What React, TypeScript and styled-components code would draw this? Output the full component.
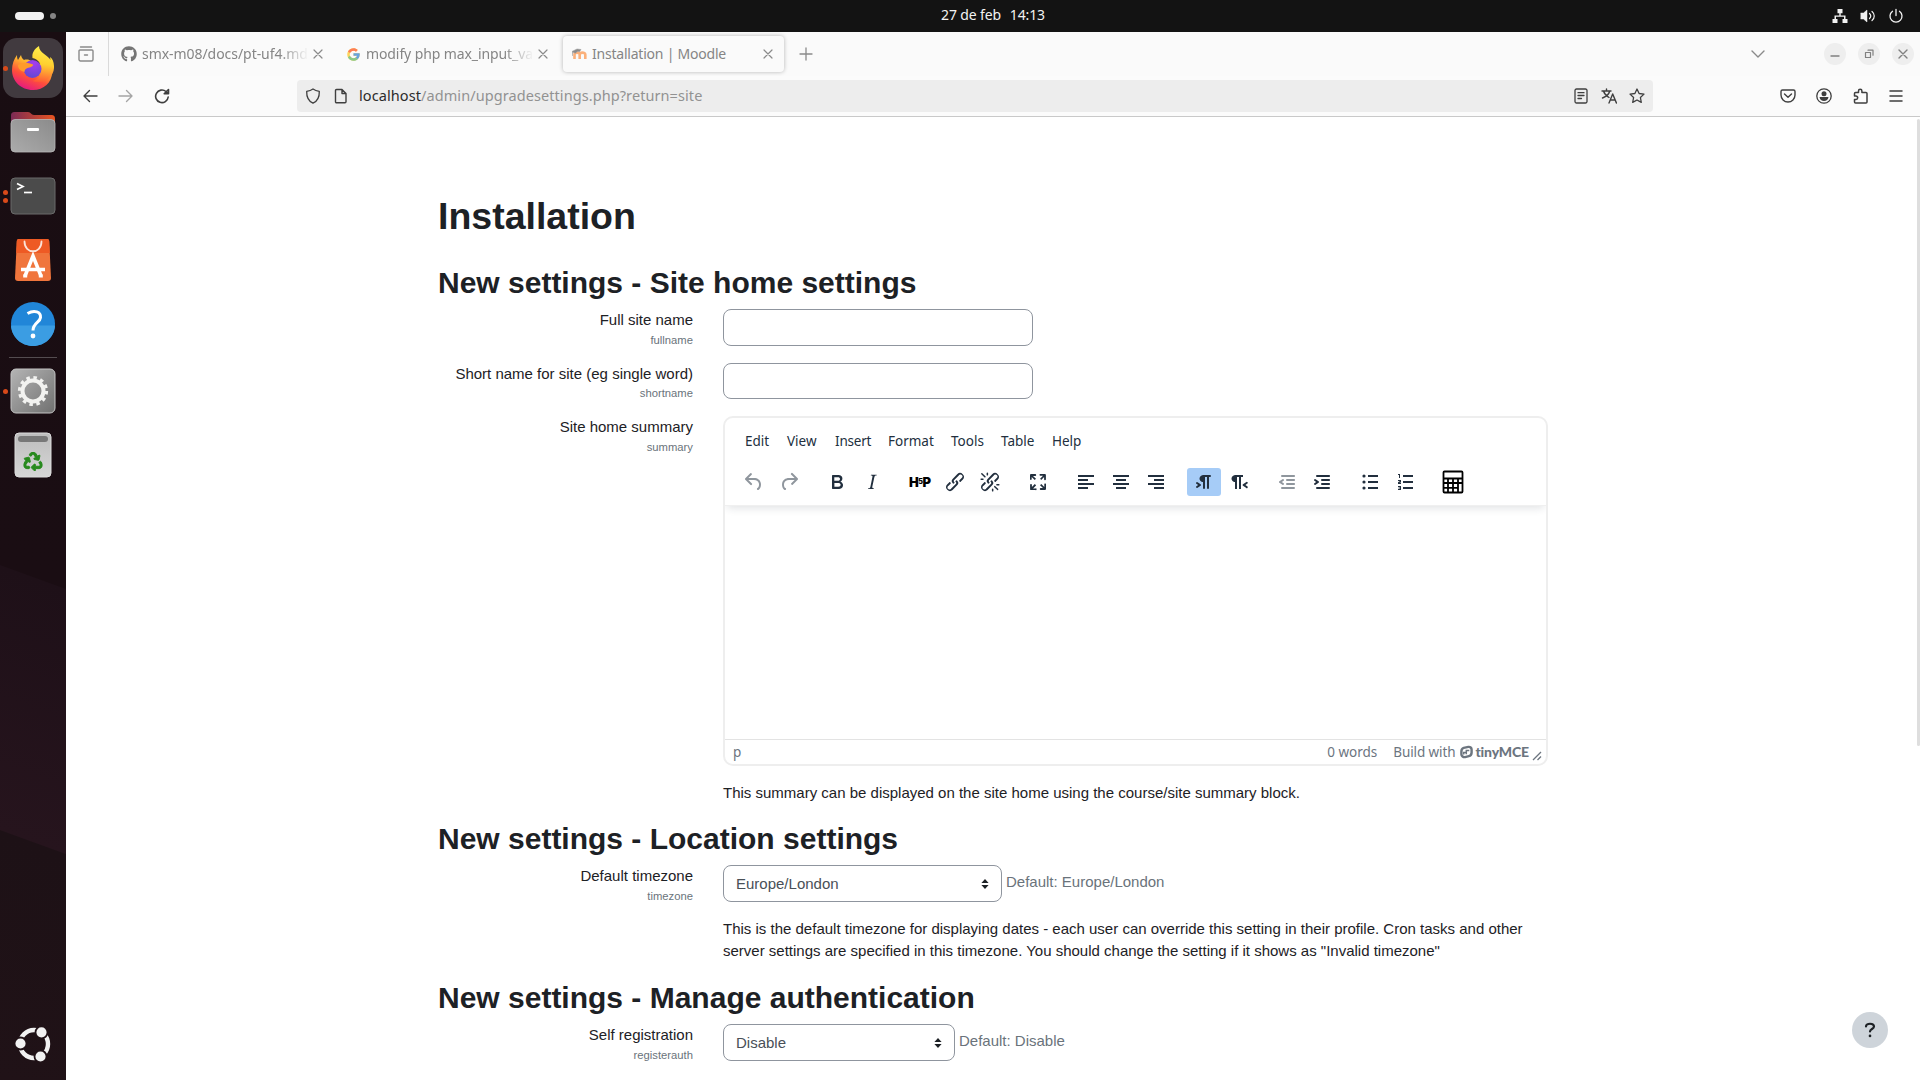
import React from "react";
import styled, { createGlobalStyle, css } from "styled-components";
import { FaGithub, FaRecycle } from "react-icons/fa";
import { FcGoogle } from "react-icons/fc";

const ui = `"Noto Sans", "Open Sans", sans-serif`;

const Global = createGlobalStyle`
  * { box-sizing: border-box; }
  body { margin: 0; background: #fff; overflow: hidden; }
  svg { display: block; flex: none; }
`;

const Screen = styled.div`
  width: 1920px;
  height: 1080px;
  display: grid;
  grid-template: 32px 1048px / 66px 1fr;
  overflow: hidden;
  font-family: "Liberation Sans", Arial, sans-serif;
`;

/* ---------- Desktop ---------- */
const TopBar = styled.header`
  grid-column: 1 / 3;
  background: #131313;
  display: grid;
  grid-template-columns: 1fr auto 1fr;
  align-items: center;
  padding: 0 16px 0 15px;
  color: #f2f2f2;
`;
const Workspaces = styled.div`
  display: flex;
  align-items: center;
  gap: 6px;
`;
const Pill = styled.span<{ $w: number; $h: number; $c: string }>`
  width: ${(p) => p.$w}px;
  height: ${(p) => p.$h}px;
  border-radius: 4px;
  background: ${(p) => p.$c};
`;
const Clock = styled.div`
  display: flex;
  gap: 9px;
  font: 14px/30px ${ui};
  padding-bottom: 2px;
  margin-left: 67px;
  letter-spacing: -0.15px;
`;
const Tray = styled.div`
  display: flex;
  justify-content: flex-end;
  align-items: center;
  gap: 12px;
`;
const Dock = styled.nav`
  background: linear-gradient(200deg, #190d12 0, #1a0d13 523px, #1e1018 524px, #26141d 772px, #1d1116 773px, #201217 100%);
  display: flex;
  flex-direction: column;
  align-items: center;
  padding-top: 6px;
`;
const DockItem = styled.div<{ $active?: boolean }>`
  position: relative;
  width: 60px;
  height: 60px;
  margin-bottom: 4px;
  border-radius: 14px;
  display: grid;
  place-items: center;
  background: ${(p) => (p.$active ? "#413a3f" : "transparent")};
`;
const Dots = styled.div`
  position: absolute;
  left: 0;
  top: 0;
  height: 60px;
  display: flex;
  flex-direction: column;
  justify-content: center;
  gap: 3px;
`;
const Dot = styled.i`
  width: 5px;
  height: 5px;
  border-radius: 50%;
  background: #d94a1a;
`;
const DockRule = styled.div`
  width: 48px;
  height: 1px;
  margin: -1px 0 3px;
  background: #544c50;
`;
const DockBottom = styled.div`
  margin-top: auto;
  padding: 0 0 17px 1px;
`;

/* ---------- Browser ---------- */
const Browser = styled.div`
  display: flex;
  flex-direction: column;
  min-width: 0;
  background: #fff;
`;
const TabBar = styled.div`
  height: 44px;
  background: #fafafa;
  display: flex;
  align-items: center;
  color: #8a8a8a;
  padding-right: 6px;
`;
const ViewButton = styled.div`
  width: 43px;
  height: 44px;
  border-right: 1px solid #dadada;
  display: grid;
  place-items: center;
  padding-right: 3px;
  margin-right: 4px;
`;
const Tab = styled.div<{ $w: number; $selected?: boolean }>`
  width: ${(p) => p.$w}px;
  height: 36px;
  border-radius: 4px;
  display: flex;
  align-items: center;
  padding: 0 12px 0 8px;
  ${(p) => p.$selected && css`padding-right: 8px; box-shadow: 0 0 4px rgba(0, 0, 0, 0.28);`}
`;
const TabTitle = styled.div<{ $fade?: boolean; $ls?: number }>`
  flex: 1;
  min-width: 0;
  overflow: hidden;
  white-space: nowrap;
  margin: 0 1px 1px 5px;
  font: 14px/24px ${ui};
  letter-spacing: ${(p) => p.$ls ?? 0}px;
  color: #858585;
  ${(p) => p.$fade && css`mask-image: linear-gradient(to left, transparent, #000 30px);`}
`;
const NewTab = styled.div`
  margin-left: 14px;
`;
const ListTabs = styled.div`
  margin-right: 58px;
`;
const Spacer = styled.div`
  flex: 1;
`;
const WinButton = styled.div`
  width: 22px;
  height: 22px;
  border-radius: 50%;
  background: #eeeeee;
  display: grid;
  place-items: center;
  margin-right: 12px;
  color: #808080;
  &:last-child { margin-right: 0; }
`;
const NavBar = styled.div`
  height: 41px;
  background: #fbfbfb;
  border-bottom: 1px solid #c9c9c9;
  display: flex;
  align-items: center;
  padding: 0 16px;
  color: #3f3f3f;
`;
const NavButtons = styled.div`
  display: flex;
  gap: 20px;
  width: 215px;
`;
const Dimmed = styled.span`
  opacity: 0.45;
`;
const UrlBar = styled.div`
  width: 1356px;
  height: 32px;
  border-radius: 4px;
  background: #ededed;
  display: flex;
  align-items: center;
  gap: 12px;
  padding: 0 8px;
`;
const Url = styled.div`
  flex: 1;
  font: 14.5px/28px ${ui};
  padding-bottom: 2px;
  letter-spacing: 0.08px;
  color: #929292;
  margin-left: -2px;
  b { font-weight: 400; color: #2b2b2b; }
`;
const NavTools = styled.div`
  flex: 1;
  display: flex;
  justify-content: flex-end;
  gap: 20px;
`;

/* ---------- Moodle page ---------- */
const Page = styled.main`
  position: relative;
  flex: 1;
  overflow: hidden;
  padding: 76.5px 0 0 372px;
  color: #1d2125;
  font-size: 15px;
  line-height: 22.5px;
`;
const Scroll = styled.div`
  position: absolute;
  right: 0;
  top: 2px;
  width: 3px;
  height: 627px;
  border-radius: 2px;
  background: #dedede;
`;
const HelpFab = styled.div`
  position: absolute;
  right: 32px;
  top: 895px;
  width: 36px;
  height: 36px;
  border-radius: 50%;
  background: #ced4da;
  display: grid;
  place-items: center;
`;
const Title = styled.h1`
  margin: 0 0 26px;
  font-size: 37.5px;
  line-height: 45px;
`;
const Heading = styled.h2`
  margin: 0 0 8.5px;
  font-size: 30px;
  line-height: 36px;
`;
const Row = styled.div<{ $gap: number }>`
  display: grid;
  grid-template-columns: 255px 825px;
  column-gap: 30px;
  margin-bottom: ${(p) => p.$gap}px;
`;
const Label = styled.div`
  text-align: right;
  small {
    display: block;
    font-size: 11.25px;
    line-height: 16.9px;
    color: #6a737b;
  }
`;
const TextInput = styled.input`
  display: block;
  width: 310px;
  height: 36.5px;
  border: 1px solid #8f959e;
  border-radius: 8px;
  background: #fff;
`;
const SelectLine = styled.div`
  display: flex;
  gap: 4px;
  color: #6a737b;
  line-height: 34px;
`;
const Select = styled.div<{ $w: number }>`
  width: ${(p) => p.$w}px;
  height: 36.5px;
  border: 1px solid #8f959e;
  border-radius: 8px;
  display: flex;
  align-items: center;
  justify-content: space-between;
  padding: 0 12px;
  color: #495057;
`;
const Note = styled.p`
  margin: 16px 0 0;
`;

/* ---------- TinyMCE ---------- */
const Editor = styled.div`
  height: 350px;
  border: 2px solid #eeeeee;
  border-radius: 10px;
  overflow: hidden;
  display: flex;
  flex-direction: column;
  color: #222f3e;
`;
const EditorHead = styled.div`
  height: 88px;
  box-shadow: 0 4px 8px -2px rgba(34, 47, 62, 0.14);
  border-bottom: 1px solid #f0f0f0;
`;
const MenuBar = styled.div`
  display: flex;
  height: 44px;
  padding-left: 20px;
  font: 13.5px/46px ${ui};
`;
const MenuItem = styled.span<{ $w: number; $ls?: number }>`
  width: ${(p) => p.$w}px;
  white-space: nowrap;
  letter-spacing: ${(p) => p.$ls ?? 0}px;
`;
const ToolBar = styled.div`
  display: flex;
  padding: 6px 0 0 12px;
`;
const Group = styled.div`
  display: flex;
  gap: 1px;
  margin-right: 14px;
`;
const Tool = styled.div<{ $on?: boolean; $off?: boolean }>`
  width: 34px;
  height: 28px;
  border-radius: 3px;
  display: grid;
  place-items: center;
  background: ${(p) => (p.$on ? "#a6ccf7" : "transparent")};
  opacity: ${(p) => (p.$off ? 0.5 : 1)};
`;
const H5P = styled.span`
  display: flex;
  align-items: center;
  font: 900 13px/20px Inter, sans-serif;
  color: #000;
  i { font-style: normal; font-size: 7px; margin: 0 -0.5px; }
`;
const Canvas = styled.div`
  flex: 1;
`;
const StatusBar = styled.div`
  height: 25px;
  border-top: 1px solid #e3e3e3;
  display: flex;
  align-items: center;
  padding: 0 4px 1px 8px;
  font: 13.5px/24px ${ui};
  color: #6c757f;
  white-space: nowrap;
`;
const Words = styled.span`
  margin-right: 16px;
`;
const Credit = styled.span`
  letter-spacing: -0.1px;
  margin-right: 5px;
`;
const TinyName = styled.span`
  font: 900 14px/20px Lato, sans-serif;
  letter-spacing: -0.15px;
  margin: 0 3px 0 2px;
`;
const Grip = styled.span`
  margin-top: 8px;
`;

/* ---------- Drawings ---------- */
type GProps = { d: string; s?: number; fill?: boolean; sw?: number };
const G = ({ d, s = 16, fill, sw = 1.4 }: GProps) => (
  <svg width={s} height={s} viewBox={`0 0 ${s} ${s}`} fill={fill ? "currentColor" : "none"} stroke={fill ? "none" : "currentColor"} strokeWidth={sw} strokeLinecap="round" strokeLinejoin="round">
    <path d={d} />
  </svg>
);
const T = ({ d }: { d: string }) => (
  <svg width="24" height="24" viewBox="0 0 24 24" fill="currentColor" fillRule="evenodd"><path d={d} /></svg>
);
const CloseX = () => <G s={16} sw={1.2} d="M4 4l8 8M12 4l-8 8" />;

const Firefox = () => (
  <svg width="42" height="44" viewBox="0 0 42 44">
    <defs>
      <linearGradient id="ffBody" x1=".8" y1="0" x2=".3" y2="1">
        <stop offset="0" stopColor="#fff44f" /><stop offset=".35" stopColor="#ffb02e" />
        <stop offset=".65" stopColor="#ff4f3a" /><stop offset="1" stopColor="#e31587" />
      </linearGradient>
      <radialGradient id="ffGlobe" cx=".6" cy=".2" r=".9">
        <stop offset="0" stopColor="#a63cf0" /><stop offset="1" stopColor="#5a4ad0" />
      </radialGradient>
      <linearGradient id="ffFlame" x1=".5" y1="0" x2=".4" y2="1">
        <stop offset="0" stopColor="#fff14d" /><stop offset=".5" stopColor="#ffd030" /><stop offset="1" stopColor="#ff5a35" />
      </linearGradient>
    </defs>
    <path d="M5 9c0 2 .3 4 1 5l3-5c.3 2 1.500 4 3 5 2-.7 5-.5 7 1l6 2 14 4c4 12-5 23-18 23C9 44 0 35 0 24c0-6 2-11 5-15z" fill="url(#ffBody)" />
    <path d="M27 0c-6 4-7 8-6.500 12 5 1 9 5 9 12 0 7-5 10-9 11 12 4 21-4 21.500-13 .2-5-1-9-4-11l.5 3C36 9 27 7 27 0z" fill="url(#ffFlame)" />
    <circle cx="20.500" cy="23" r="9" fill="url(#ffGlobe)" />
    <path d="M6 19c4-3 9-3 15-.5.5 2-3 3-5.500 3.500-2 .8-3 2-3 4C9 25 6 23 6 19z" fill="#ff9a2c" />
  </svg>
);
const Files = () => (
  <svg width="46" height="42" viewBox="0 0 46 42">
    <defs>
      <linearGradient id="flBack"><stop offset="0" stopColor="#7b2a55" /><stop offset="1" stopColor="#e95420" /></linearGradient>
      <linearGradient id="flFront" x1="0" y1="1" x2="1" y2="0"><stop offset="0" stopColor="#ababab" /><stop offset="1" stopColor="#8b8b8b" /></linearGradient>
    </defs>
    <path d="M1 5c0-3 1-4 4-4h13c3 0 3 3 6 3h17c3 0 4 1 4 4v12H1z" fill="url(#flBack)" />
    <rect x="1" y="8.500" width="44" height="32.500" rx="4" fill="url(#flFront)" stroke="#b9b9b9" strokeWidth=".8" />
    <rect x="17" y="17" width="12" height="3" rx="1" fill="#fff" />
  </svg>
);
const Terminal = () => (
  <svg width="46" height="38" viewBox="0 0 46 38">
    <rect x="1" y="1" width="44" height="36" rx="4" fill="#4b4b4b" stroke="#6a6a6a" />
    <path d="M7 6.500l6 3-6 3" fill="none" stroke="#fff" strokeWidth="1.700" /><path d="M14 15.500h8" stroke="#fff" strokeWidth="1.700" />
  </svg>
);
const Software = () => (
  <svg width="36" height="42" viewBox="0 0 36 42">
    <path d="M4 0h28c1.500 0 2 .8 2.200 2L36 39c0 2-1 3-3 3H3c-2 0-3-1-3-3L1.800 2C2 .8 2.500 0 4 0z" fill="#f0753c" />
    <path d="M4 0h28c1.500 0 2 .8 2.200 2l.6 12H1.200l.6-12C2 .8 2.500 0 4 0z" fill="#ee5a24" />
    <path d="M9.500 2.500c0 13 17 13 17 0" fill="none" stroke="#fbe3d8" strokeWidth="1.800" strokeLinecap="round" />
    <path d="M10 37l8-20 8 20M6 30.500h24" fill="none" stroke="#fff" strokeWidth="3.600" />
    <path d="M8.200 37h4M23.800 37h4" stroke="#fff" strokeWidth="3" />
  </svg>
);
const Help = () => (
  <svg width="46" height="46" viewBox="0 0 46 46">
    <circle cx="23" cy="23" r="22" fill="#2186d8" />
    <path d="M1 24.500h44C44.500 36 35 45 23 45S1.500 36 1 24.500z" fill="#3b9de3" />
    <path d="M17.500 12.500c7-4 13.500-1.500 13 4-.5 5-7.500 5.500-7.500 13" fill="none" stroke="#fff" strokeWidth="3" />
    <circle cx="23" cy="35" r="2.400" fill="#fff" />
  </svg>
);
const Settings = () => (
  <svg width="46" height="46" viewBox="0 0 46 46">
    <defs><linearGradient id="stBg" x2="1" y2="1"><stop offset="0" stopColor="#b4b4b4" /><stop offset="1" stopColor="#707070" /></linearGradient></defs>
    <rect x="1" y="1" width="44" height="44" rx="5" fill="url(#stBg)" stroke="#c4c4c4" />
    <circle cx="23" cy="23" r="10.500" fill="none" stroke="#f2f2f0" strokeWidth="4" />
    <circle cx="23" cy="23" r="13.500" fill="none" stroke="#f2f2f0" strokeWidth="3.200" strokeDasharray="3.500 3.568" />
  </svg>
);
const Trash = () => (
  <svg width="38" height="46" viewBox="0 0 38 46">
    <defs><linearGradient id="trBg" x2="0" y2="1"><stop offset="0" stopColor="#bdbdbd" /><stop offset="1" stopColor="#d6d6d6" /></linearGradient></defs>
    <rect x="1" y="1" width="36" height="44" rx="4" fill="url(#trBg)" stroke="#dcdcdc" />
    <rect x="4" y="4" width="30" height="6" rx="3" fill="#787878" />
    <g transform="translate(9.500 20)"><FaRecycle size={19} color="#288a1e" stroke="#288a1e" strokeWidth={26} /></g>
  </svg>
);
const UbuntuMark = () => (
  <svg width="38" height="38" viewBox="-19 -19 38 38">
    <circle r="14" fill="none" stroke="#f2f2f2" strokeWidth="4.400" />
    <g fill="#f2f2f2" stroke="#201217" strokeWidth="1.800">
      <circle cx="-13.500" cy="-.5" r="6" /><circle cx="7.500" cy="-11.700" r="6" /><circle cx="6.500" cy="12.500" r="6" />
    </g>
  </svg>
);
const MoodleMark = () => (
  <svg width="16" height="16" viewBox="0 0 16 16" fill="none">
    <path d="M3.500 13V8.500C3.500 6 8.700 6 8.700 8.500V13M8.700 13V8.500c0-2.500 5.600-2.500 5.600 0V13" stroke="#fbb07a" strokeWidth="2.600" />
    <path d="M1 5.500L6 3l4 .5-1.500 2.200c-1.500-.5-3 0-4 1.500L1.500 6v4" fill="#8a8a8a" stroke="#a0a0a0" strokeWidth=".6" />
  </svg>
);
const TinyMark = () => (
  <svg width="13" height="14" viewBox="0 0 14 14" fill="none" stroke="currentColor">
    <path d="M4 2.500l5-1c2-.3 3.500 1 3.500 3v3c0 2-1 3.500-3 4l-4 1c-2 .3-4-1-4-3v-3c0-2 .8-3.500 2.500-4z" strokeWidth="2.600" />
    <path d="M4 9.800V7.500h2.800V5.300H10M6.800 7.500v1.800" strokeWidth="1.600" />
  </svg>
);
const Arrows = () => (
  <svg width="8" height="10" viewBox="0 0 8 10" fill="#1d2125"><path d="M4 0l3.600 4H.4zM4 10L.4 6h7.200z" /></svg>
);

const chain = "M6.2 12.3a1 1 0 0 1 1.4 1.4l-2 2a2 2 0 1 0 2.600 2.800l4.800-4.800a1 1 0 0 0 0-1.400 1 1 0 1 1 1.400-1.300 2.900 2.900 0 0 1 0 4L9.600 20a3.900 3.900 0 0 1-5.500-5.500l2-2Zm11.600-.6a1 1 0 0 1-1.400-1.400l2-2a2 2 0 1 0-2.600-2.800L11 10.300a1 1 0 0 0 0 1.400A1 1 0 1 1 9.600 13a2.900 2.900 0 0 1 0-4L14.400 4a3.900 3.900 0 0 1 5.500 5.500l-2 2Z";
const dentLines = "M7 5h12c.6 0 1 .4 1 1s-.4 1-1 1H7a1 1 0 1 1 0-2Zm5 4h7c.6 0 1 .4 1 1s-.4 1-1 1h-7a1 1 0 0 1 0-2Zm0 4h7c.6 0 1 .4 1 1s-.4 1-1 1h-7a1 1 0 0 1 0-2Zm-5 4h12a1 1 0 0 1 0 2H7a1 1 0 0 1 0-2Z";
const icons = {
  undo: "M6.4 8H12c3.700 0 6.200 2 6.800 5.100.6 2.700-.4 5.600-2.300 6.800a1 1 0 0 1-1-1.800c1.100-.6 1.800-2.700 1.400-4.600-.5-2.100-2.100-3.500-4.900-3.500H6.400l3.300 3.300a1 1 0 1 1-1.400 1.400l-5-5a1 1 0 0 1 0-1.400l5-5a1 1 0 0 1 1.400 1.400L6.400 8z",
  redo: "M17.600 10H12c-2.800 0-4.400 1.400-4.900 3.500-.4 2 .3 4 1.400 4.600a1 1 0 1 1-1 1.800c-2-1.200-2.900-4.100-2.300-6.800.6-3 3-5.100 6.800-5.100h5.600l-3.300-3.300a1 1 0 1 1 1.400-1.400l5 5a1 1 0 0 1 0 1.400l-5 5a1 1 0 0 1-1.400-1.400l3.300-3.300z",
  bold: "M7.800 19c-.3 0-.5 0-.6-.2l-.2-.5V5.700c0-.2 0-.4.2-.5l.6-.2h5c1.500 0 2.700.3 3.500 1 .7.6 1.100 1.400 1.100 2.500a3 3 0 0 1-.6 1.900c-.4.6-1 1-1.600 1.200.4.1.9.3 1.300.6s.8.7 1 1.200c.4.4.5 1 .5 1.600 0 1.300-.4 2.300-1.300 3-.8.7-2.100 1-3.800 1H7.800Zm5-8.300c.6 0 1.200-.1 1.600-.5.4-.3.6-.7.6-1.300 0-1.100-.8-1.700-2.300-1.700H9.300v3.500h3.400Zm.5 6c.7 0 1.300-.1 1.700-.4.4-.4.6-.9.6-1.500s-.2-1-.7-1.400c-.4-.3-1-.4-2-.4H9.400v3.800h4Z",
  italic: "m16.700 4.700-.1.900h-.3c-.6 0-1 0-1.400.3-.3.3-.4.6-.5 1.100l-2.100 9.800v.6c0 .5.4.8 1.400.8h.2l-.2.8H8l.2-.8h.2c1.100 0 1.800-.5 2-1.500l2-9.800.1-.5c0-.6-.4-.8-1.400-.8h-.3l.2-.9h5.800Z",
  unlink: chain + "M7.600 6.300a.8.800 0 0 1-1 1.100L3.300 4.200a.7.700 0 1 1 1-1l3.200 3.100ZM5.100 8.600a.8.800 0 0 1 0 1.500H3a.8.800 0 0 1 0-1.500H5Zm5-3.500a.8.800 0 0 1-1.500 0V3a.8.800 0 0 1 1.500 0V5Zm6 11.800a.8.800 0 0 1 1-1l3.200 3.200a.8.800 0 0 1-1 1L16 17Zm-2.200 2a.8.800 0 0 1 1.500 0V21a.8.800 0 0 1-1.500 0V19Zm5-3.500a.7.700 0 1 1 0-1.500H21a.8.800 0 0 1 0 1.500H19Z",
  full: "m15.300 10-1.200-1.300 2.900-3h-2.300a.9.900 0 1 1 0-1.700H19c.5 0 .9.4.9.9v4.400a.9.900 0 1 1-1.800 0V7l-2.900 3Zm0 4 3 3v-2.300a.9.900 0 1 1 1.700 0V19c0 .5-.4.9-.9.9h-4.400a.9.900 0 1 1 0-1.800H17l-3-2.900 1.300-1.200ZM10 15.400l-2.900 3h2.300a.9.900 0 1 1 0 1.700H5a.9.900 0 0 1-.9-.9v-4.400a.9.900 0 1 1 1.800 0V17l2.900-3 1.200 1.300ZM8.700 10 5.700 7v2.300a.9.900 0 0 1-1.700 0V5c0-.5.4-.9.9-.9h4.400a.9.900 0 0 1 0 1.800H7l3 2.900-1.300 1.200Z",
  left: "M4 5h16v2H4zM4 9h10v2H4zM4 13h16v2H4zM4 17h10v2H4z",
  center: "M4 5h16v2H4zM7 9h10v2H7zM4 13h16v2H4zM7 17h10v2H7z",
  right: "M4 5h16v2H4zM10 9h10v2H10zM4 13h16v2H4zM10 17h10v2H10z",
  ltr: "M11 5h7a1 1 0 0 1 0 2h-1v11a1 1 0 0 1-2 0V7h-2v11a1 1 0 0 1-2 0v-6c-.5 0-1 0-1.400-.3A3.400 3.400 0 0 1 7.800 10a3.300 3.300 0 0 1 0-2.800 3.400 3.400 0 0 1 1.800-1.800L11 5ZM4.400 16.200 6.200 15l-1.800-1.200a1 1 0 0 1 1.200-1.600l3 2a1 1 0 0 1 0 1.600l-3 2a1 1 0 1 1-1.200-1.600Z",
  rtl: "M8 5h8v2h-2v12h-2V7h-2v12H8v-7c-.5 0-1 0-1.400-.3A3.400 3.400 0 0 1 4.800 10a3.300 3.300 0 0 1 0-2.800 3.400 3.400 0 0 1 1.800-1.800L8 5Zm12 11.200a1 1 0 1 1-1 1.600l-3-2a1 1 0 0 1 0-1.600l3-2a1 1 0 1 1 1 1.600L18.400 15l1.800 1.200Z",
  outdent: dentLines + "M8.600 13.200a1 1 0 0 1-1.200 1.600l-3-2a1 1 0 0 1 0-1.600l3-2a1 1 0 0 1 1.200 1.600L6.800 12l1.800 1.200Z",
  indent: dentLines + "M4.400 13.200L6.200 12l-1.800-1.200a1 1 0 0 1 1.200-1.600l3 2a1 1 0 0 1 0 1.600l-3 2a1 1 0 1 1-1.200-1.600Z",
  bullets: "M10 5h10v2H10zM10 11h10v2H10zM10 17h10v2H10zM6 4.400a1.600 1.600 0 1 1 0 3.200 1.600 1.600 0 0 1 0-3.200zM6 10.400a1.600 1.600 0 1 1 0 3.200 1.600 1.600 0 0 1 0-3.200zM6 16.400a1.600 1.600 0 1 1 0 3.200 1.600 1.600 0 0 1 0-3.200z",
  numbers: "M10 5h10v2H10zM10 11h10v2H10zM10 17h10v2H10zM5 4h2v4H6V5H5zM5 10h3v2.400L6.300 13H8v1H5v-1.800L7 11H5zM5 16h3v4H5v-1h2v-.6H5.500v-.8H7V17H5z",
};
const CalcIcon = () => (
  <svg width="24" height="24" viewBox="0 0 24 24" fill="none" stroke="#000" strokeWidth="1.800">
    <rect x="2.500" y="1.500" width="19" height="21" rx="1" /><path d="M2 8.500h20M2 13h20M2 17.800h15M7 8v14M12 8v14M17 8v14" />
  </svg>
);

export default function App() {
  return (
    <Screen>
      <Global />
      <TopBar>
        <Workspaces><Pill $w={29} $h={8} $c="#f2f2f2" /><Pill $w={6} $h={6} $c="#858585" /></Workspaces>
        <Clock><span>27 de feb</span><span>14:13</span></Clock>
        <Tray>
          <G fill d="M5.500 1h5v4.200H8.700V7.500H13.500v3.500h2v4h-5v-4h1.500V8.800H4V11h1.500v4h-5v-4h2V7.500H7.300V5.200H5.500z" />
          <svg width="16" height="16" viewBox="0 0 16 16" fill="none" stroke="#f2f2f2" strokeLinecap="round"><path d="M1 5h2.500L7 2v12L3.500 11H1z" fill="#f2f2f2" strokeWidth=".5" /><path d="M9.500 5.500c1.500 1.500 1.500 3.500 0 5M12 3.500c3 2.500 3 6.500 0 9" strokeWidth="1.200" /></svg>
          <G sw={1.300} d="M8 1.500v6M4.500 3.300a6 6 0 1 0 7 0" />
        </Tray>
      </TopBar>

      <Dock>
        <DockItem $active><Dots><Dot /></Dots><Firefox /></DockItem>
        <DockItem><Files /></DockItem>
        <DockItem><Dots><Dot /><Dot /></Dots><Terminal /></DockItem>
        <DockItem><Software /></DockItem>
        <DockItem><Help /></DockItem>
        <DockRule />
        <DockItem><Dots><Dot /></Dots><Settings /></DockItem>
        <DockItem><Trash /></DockItem>
        <DockBottom><UbuntuMark /></DockBottom>
      </Dock>

      <Browser>
        <TabBar>
          <ViewButton><G sw={1.400} d="M2.500 1h11M2 4h12a1 1 0 0 1 1 1v8.500a1.500 1.500 0 0 1-1.500 1.500h-11A1.500 1.500 0 0 1 1 13.500V5a1 1 0 0 1 1-1zM6.500 9h3" /></ViewButton>
          <Tab $w={225}><FaGithub size={16} color="#757575" /><TabTitle $fade $ls={-0.05}>smx-m08/docs/pt-uf4.md</TabTitle><CloseX /></Tab>
          <Tab $w={225}><FcGoogle size={15} opacity={0.65} /><TabTitle $fade $ls={-0.1}>modify php max_input_va</TabTitle><CloseX /></Tab>
          <Tab $w={221} $selected><MoodleMark /><TabTitle $ls={-0.22}>Installation | Moodle</TabTitle><CloseX /></Tab>
          <NewTab><G sw={1.300} d="M8 2v12M2 8h12" /></NewTab>
          <Spacer />
          <ListTabs><G d="M2 5l6 6 6-6" /></ListTabs>
          <WinButton><G s={10} d="M1 7h8" /></WinButton>
          <WinButton><G s={10} sw={1.200} d="M1.500 3.500h5v5h-5zM4 1.200h5v5" /></WinButton>
          <WinButton><G s={10} sw={1.400} d="M1 1l8 8M9 1L1 9" /></WinButton>
        </TabBar>
        <NavBar>
          <NavButtons>
            <G d="M15 8H2M7.500 2.500L2 8l5.500 5.500" />
            <Dimmed><G d="M1 8h13M8.500 2.500L14 8l-5.500 5.500" /></Dimmed>
            <G sw={1.600} d="M14.200 9A6.300 6.300 0 1 1 12 3.500l2 2M14.500 1.500v4.300h-4.300z" />
          </NavButtons>
          <UrlBar>
            <G sw={1.300} d="M8 1c2 1.400 4 2 6.300 2.400C14.500 9 12.500 13 8 15.200 3.500 13 1.500 9 1.700 3.400 4 3 6 2.400 8 1z" />
            <G d="M3.500 1.500H9l4 4v8.300a1 1 0 0 1-1 1H3.500a1 1 0 0 1-1-1V2.500a1 1 0 0 1 1-1zM9 2v3.500h3.500" />
            <Url><b>localhost</b>/admin/upgradesettings.php?return=site</Url>
            <G sw={1.300} d="M3.500 1h9a1.500 1.500 0 0 1 1.500 1.500v11a1.500 1.500 0 0 1-1.500 1.500h-9A1.500 1.500 0 0 1 2 13.500v-11A1.500 1.500 0 0 1 3.500 1zM5 4.700h6M5 7.500h6M5 10.500h3.500" />
            <G sw={1.400} d="M1 3h9M5.500 1v2M2.500 3c1 3.500 3 5 5.500 6.500M8.700 3C8 6 5.500 8.500 1.500 10M8 15l3.700-9 3.700 9M9.200 12h5" />
            <G sw={1.300} d="M8 1l2.100 4.500 4.900.6-3.600 3.400.9 4.900L8 12l-4.300 2.400.9-4.900L1 6.100l4.900-.6z" />
          </UrlBar>
          <NavTools>
            <G d="M2.500 2h11A1.500 1.500 0 0 1 15 3.500V7a7 7 0 0 1-14 0V3.500A1.500 1.500 0 0 1 2.500 2zM4.500 6L8 9.300 11.500 6" />
            <svg width="16" height="16" viewBox="0 0 16 16"><circle cx="8" cy="8" r="7.200" fill="none" stroke="currentColor" strokeWidth="1.300" /><circle cx="8" cy="5.700" r="2.500" fill="currentColor" /><path d="M3.500 9h9c-.4 2.500-2 4-4.500 4s-4.100-1.500-4.500-4z" fill="currentColor" /></svg>
            <G sw={1.500} d="M6.500 4.500V3a1.700 1.700 0 0 1 3.400 0v1.500H14a1 1 0 0 1 1 1V14a1 1 0 0 1-1 1H3.500a1 1 0 0 1-1-1v-2.500H4a1.700 1.700 0 0 0 0-3.400H2.500V5.500a1 1 0 0 1 1-1z" />
            <G sw={1.500} d="M2 3h12M2 8h12M2 13h12" />
          </NavTools>
        </NavBar>

        <Page>
          <Title>Installation</Title>
          <Heading>New settings - Site home settings</Heading>
          <Row $gap={14.3}><Label>Full site name<small>fullname</small></Label><TextInput /></Row>
          <Row $gap={14.3}><Label>Short name for site (eg single word)<small>shortname</small></Label><TextInput /></Row>
          <Row $gap={16}>
            <Label>Site home summary<small>summary</small></Label>
            <div>
              <Editor>
                <EditorHead>
                  <MenuBar>
                    <MenuItem $w={42}>Edit</MenuItem><MenuItem $w={48}>View</MenuItem><MenuItem $w={53} $ls={-0.2}>Insert</MenuItem>
                    <MenuItem $w={63}>Format</MenuItem><MenuItem $w={50}>Tools</MenuItem><MenuItem $w={51}>Table</MenuItem><MenuItem $w={40}>Help</MenuItem>
                  </MenuBar>
                  <ToolBar>
                    <Group><Tool $off><T d={icons.undo} /></Tool><Tool $off><T d={icons.redo} /></Tool></Group>
                    <Group><Tool><T d={icons.bold} /></Tool><Tool><T d={icons.italic} /></Tool></Group>
                    <Group><Tool><H5P>H<i>5</i>P</H5P></Tool><Tool><T d={chain} /></Tool><Tool><T d={icons.unlink} /></Tool></Group>
                    <Group><Tool><T d={icons.full} /></Tool></Group>
                    <Group><Tool><T d={icons.left} /></Tool><Tool><T d={icons.center} /></Tool><Tool><T d={icons.right} /></Tool></Group>
                    <Group><Tool $on><T d={icons.ltr} /></Tool><Tool><T d={icons.rtl} /></Tool></Group>
                    <Group><Tool $off><T d={icons.outdent} /></Tool><Tool><T d={icons.indent} /></Tool></Group>
                    <Group><Tool><T d={icons.bullets} /></Tool><Tool><T d={icons.numbers} /></Tool></Group>
                    <Group><Tool><CalcIcon /></Tool></Group>
                  </ToolBar>
                </EditorHead>
                <Canvas />
                <StatusBar>
                  <span>p</span><Spacer /><Words>0 words</Words><Credit>Build with</Credit>
                  <TinyMark />
                  <TinyName>tinyMCE</TinyName>
                  <Grip><svg width="10" height="10" viewBox="0 0 10 10" stroke="currentColor" strokeWidth="1.300"><path d="M1 9l8-8M5.500 9L9 5.500" /></svg></Grip>
                </StatusBar>
              </Editor>
              <Note>This summary can be displayed on the site home using the course/site summary block.</Note>
            </div>
          </Row>
          <Heading>New settings - Location settings</Heading>
          <Row $gap={17}>
            <Label>Default timezone<small>timezone</small></Label>
            <div>
              <SelectLine><Select $w={279}>Europe/London<Arrows /></Select>Default: Europe/London</SelectLine>
              <Note>This is the default timezone for displaying dates - each user can override this setting in their profile. Cron tasks and other server settings are specified in this timezone. You should change the setting if it shows as "Invalid timezone"</Note>
            </div>
          </Row>
          <Heading>New settings - Manage authentication</Heading>
          <Row $gap={16}>
            <Label>Self registration<small>registerauth</small></Label>
            <SelectLine><Select $w={232}>Disable<Arrows /></Select>Default: Disable</SelectLine>
          </Row>
          <Scroll />
          <HelpFab><svg width="12" height="16" viewBox="0 0 12 16" fill="none" stroke="#1d2125" strokeWidth="2.200" strokeLinecap="round"><path d="M2 4.500C2 .8 10 .8 10 4.500c0 2.500-4 2.500-4 5" /><path d="M6 13.800v.1" strokeWidth="2.600" /></svg></HelpFab>
        </Page>
      </Browser>
    </Screen>
  );
}
